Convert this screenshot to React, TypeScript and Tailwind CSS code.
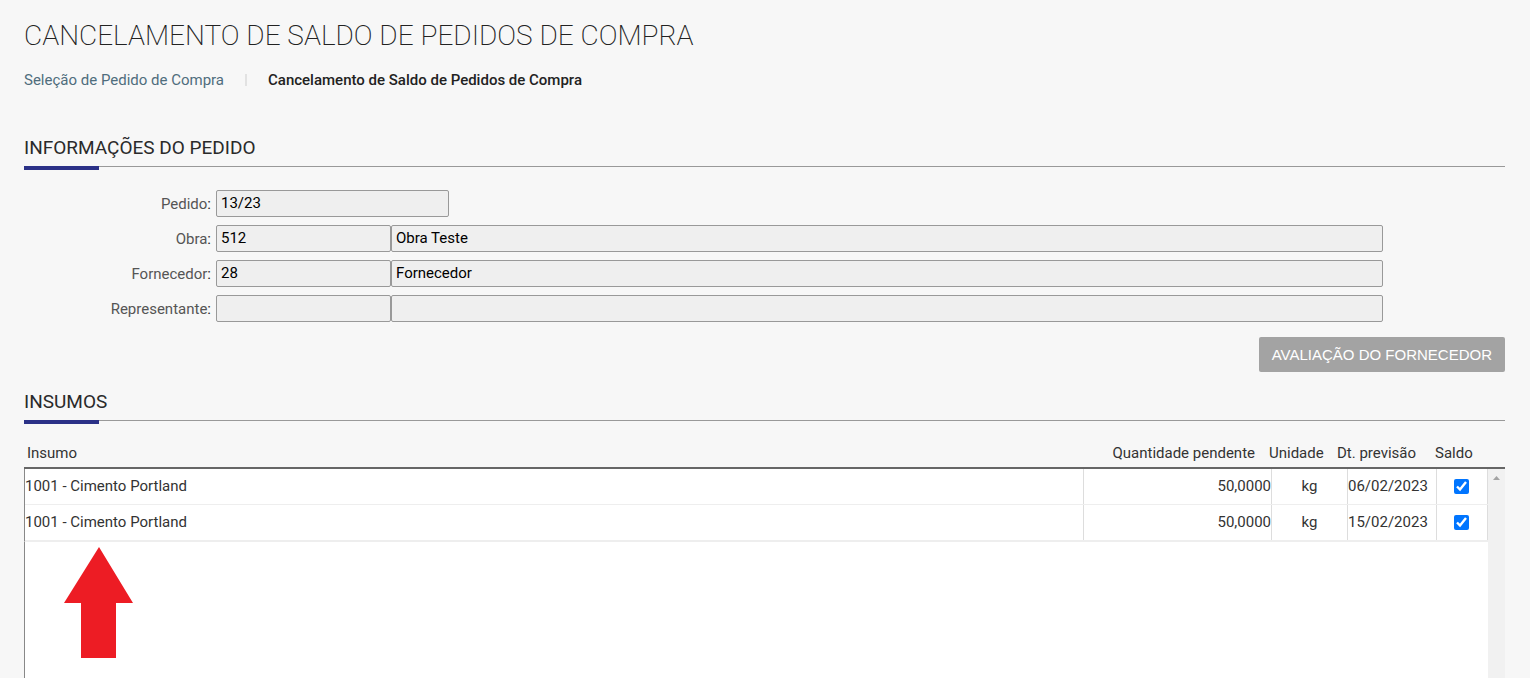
import React, { useState } from 'react'

interface Campo {
  id: string
  label: string
  codigo: string
  descricao?: string
}

interface Insumo {
  nome: string
  quantidade: string
  unidade: string
  previsao: string
}

const campos: Campo[] = [
  { id: 'pedido', label: 'Pedido', codigo: '13/23' },
  { id: 'obra', label: 'Obra', codigo: '512', descricao: 'Obra Teste' },
  { id: 'fornecedor', label: 'Fornecedor', codigo: '28', descricao: 'Fornecedor' },
  { id: 'representante', label: 'Representante', codigo: '', descricao: '' },
]

const insumos: Insumo[] = [
  { nome: '1001 - Cimento Portland', quantidade: '50,0000', unidade: 'kg', previsao: '06/02/2023' },
  { nome: '1001 - Cimento Portland', quantidade: '50,0000', unidade: 'kg', previsao: '15/02/2023' },
]

const inputClass = 'h-[27px] rounded-[2px] border border-[#999] bg-[#efefef] pl-1 pb-[2px] text-black outline-none'

// section title with the blue mark over the thin line
const SectionTitle: React.FC<{ children: React.ReactNode }> = ({ children }) => (
  <div>
    <h2 className="pt-px pb-[6px] text-[19px] leading-6 text-[#2a2a2a]">{children}</h2>
    <div className="h-1 border-t border-[#999]">
      <div className="-mt-px h-1 w-[75px] bg-[#2b3187]"></div>
    </div>
  </div>
)

const CampoRow: React.FC<{ campo: Campo }> = ({ campo }) => (
  <div className="flex items-center">
    <label htmlFor={campo.id} className="w-48 shrink-0 pr-[5px] text-right text-[#555]">
      {campo.label}<span className="text-[#222]">:</span>
    </label>
    {campo.descricao === undefined ? (
      <input id={campo.id} className={`${inputClass} w-[233px]`} value={campo.codigo} readOnly />
    ) : (
      <>
        <input id={campo.id} className={`${inputClass} w-[175px]`} value={campo.codigo} readOnly />
        <input
          aria-label={campo.label}
          className={`${inputClass} min-w-0 flex-1`}
          value={campo.descricao}
          readOnly
        />
      </>
    )}
  </div>
)

export default function App() {
  const [saldo, setSaldo] = useState<boolean[]>([true, true])

  function toggleSaldo(index: number) {
    setSaldo(saldo.map((value, i) => (i === index ? !value : value)))
  }

  return (
    <div className="flex min-h-screen flex-col bg-[#f7f7f7] pl-6 pr-[25px] font-[Roboto,sans-serif] text-[15px] leading-5 text-[#333]">
      <h1 className="pt-4 text-[28px] font-extralight leading-10 text-[#222]">CANCELAMENTO DE SALDO DE PEDIDOS DE COMPRA</h1>

      <nav className="mt-[14px] flex items-center">
        <a href="#selecao" className="text-[#4f6d7d]">Seleção de Pedido de Compra</a>
        <span className="mx-[21px] h-3 w-[2px] bg-[#e2e2e2]"></span>
        <span className="font-medium text-[#222]">Cancelamento de Saldo de Pedidos de Compra</span>
      </nav>

      <section className="mt-[45px]">
        <SectionTitle>INFORMAÇÕES DO PEDIDO</SectionTitle>
        <div className="mt-5 mr-[122px] flex flex-col gap-2">
          {campos.map((campo) => (
            <CampoRow key={campo.id} campo={campo} />
          ))}
        </div>
        <div className="mt-[15px] flex justify-end">
          <button
            type="button"
            className="h-[35px] rounded-[2px] bg-[#a3a3a3] px-[13px] font-['Liberation_Sans',Arial,sans-serif] text-[15px] text-white"
          >
            AVALIAÇÃO DO FORNECEDOR
          </button>
        </div>
      </section>

      <section className="mt-[17px] flex flex-1 flex-col">
        <SectionTitle>INSUMOS</SectionTitle>

        <div className="relative mt-[17px] flex flex-1 flex-col">
          <table className="block">
            <thead className="block border-b-2 border-[#666]">
              <tr className="table h-[26px] w-full table-fixed">
                <th className="pb-[2px] pl-[3px] text-left font-normal">Insumo</th>
                <th className="w-[188px] pb-[2px] pr-[14px] text-right font-normal">Quantidade pendente</th>
                <th className="w-[68px] pb-[2px] text-left font-normal">Unidade</th>
                <th className="w-[98px] pb-[2px] text-left font-normal">Dt. previsão</th>
                <th className="w-[70px] pb-[2px] text-left font-normal">Saldo</th>
              </tr>
            </thead>
            <tbody className="block border-b border-l border-b-[#eee] border-l-[#888] bg-white pr-[17px]">
              {insumos.map((insumo, index) => (
                <tr key={index} className="table h-9 w-full table-fixed border-collapse">
                  <td className="border-b border-r border-[#eee] border-r-[#ddd] pb-[2px]">{insumo.nome}</td>
                  <td className="w-[188px] border-b border-r border-[#eee] border-r-[#ddd] pb-[2px] text-right">{insumo.quantidade}</td>
                  <td className="w-[76px] border-b border-r border-[#eee] border-r-[#ddd] pb-[2px] text-center">{insumo.unidade}</td>
                  <td className="w-[89px] border-b border-r border-[#eee] border-r-[#ddd] pb-[2px]">{insumo.previsao}</td>
                  <td className="w-[51px] border-b border-r border-[#eee] border-r-[#ddd] pr-[2px]">
                    <input
                      type="checkbox"
                      aria-label="Saldo"
                      className="mx-auto block size-[15px] accent-[#0075ff]"
                      checked={saldo[index]}
                      onChange={() => toggleSaldo(index)}
                    />
                  </td>
                </tr>
              ))}
            </tbody>
          </table>

          <div className="min-h-[136px] flex-1 border-l border-[#888] bg-white pl-[39px] pt-[5px]">
            <svg width="69" height="111" viewBox="0 0 69 111" fill="#ed1c24" aria-hidden="true">
              <path d="M35 0L69 56H52V111H17V56H0Z" />
            </svg>
          </div>

          {/* scroll track */}
          <div className="absolute bottom-0 right-0 top-7 flex w-[17px] justify-center bg-[#f1f1f1] pt-[7px]">
            <svg width="7" height="4" viewBox="0 0 7 4" fill="#a3a3a3" aria-hidden="true">
              <path d="M3.5 0L7 4H0Z" />
            </svg>
          </div>
        </div>
      </section>
    </div>
  )
}
